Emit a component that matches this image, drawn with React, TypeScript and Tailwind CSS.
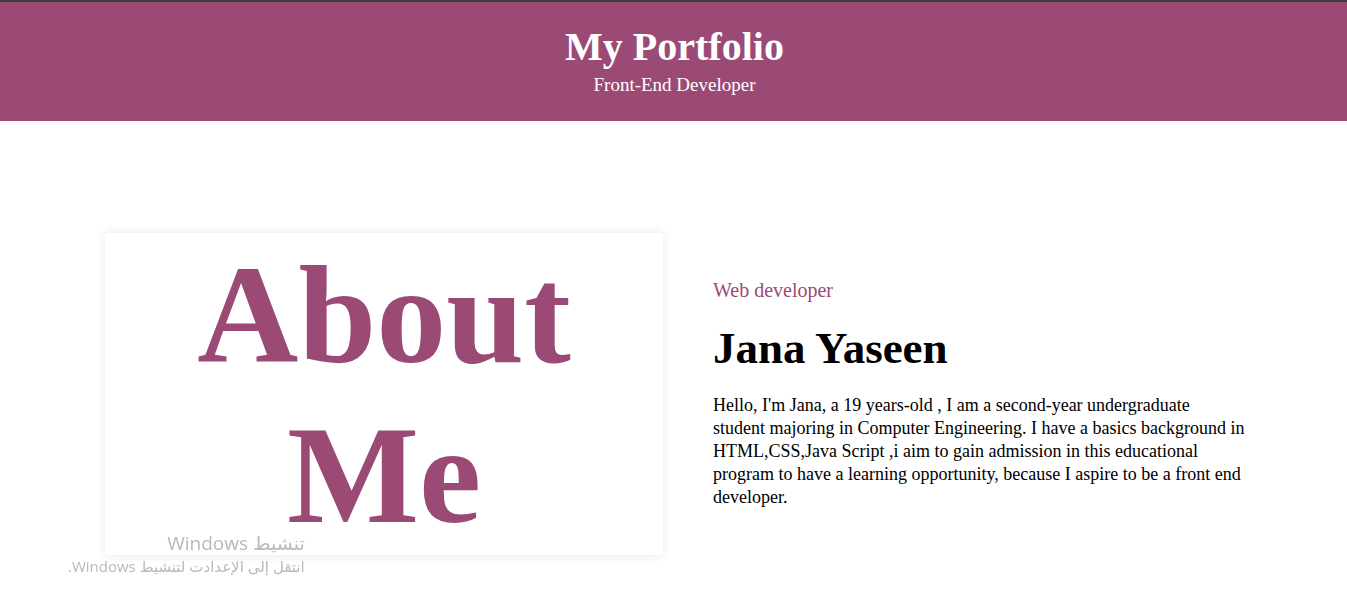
export default function App() {
  return (
    <div className="min-h-screen border-t-2 border-[#3c3c3c] bg-white font-['Liberation_Serif',serif] text-black">
      <header className="bg-[#9b4a75] pt-[21px] pb-[23px] pl-0.5 text-center text-white">
        <h1 className="text-[40px] leading-[48px] font-bold">My Portfolio</h1>
        <p className="text-[19px] leading-[27px]">Front-End Developer</p>
      </header>
      <main className="grid grid-cols-1 items-center gap-[50px] pt-28 pr-[7.5%] pb-12 pl-[7.8%] md:grid-cols-[558fr_533fr]">
        <section className="pt-0.5 text-center shadow-[0_0_10px_rgba(0,0,0,0.1)]">
          <h2 className="px-16 text-[140px] leading-[160px] font-bold text-[#9b4a75]">About Me</h2>
        </section>
        <section className="pb-0.5">
          <p className="text-[20px] leading-[24px] text-[#9b4a75]">Web developer</p>
          <h2 className="mt-[18px] text-[45px] leading-[56px] font-bold">Jana Yaseen</h2>
          <p className="mt-[18px] text-[18px] leading-[23px]">
            Hello, I'm Jana, a 19 years-old , I am a second-year undergraduate student majoring in Computer Engineering. I have a basics background in HTML,CSS,Java Script ,i aim to gain admission in this educational program to have a learning opportunity, because I aspire to be a front end developer.
          </p>
        </section>
      </main>
      <aside dir="rtl" className="pointer-events-none fixed bottom-8 left-[68px] font-['Open_Sans','DejaVu_Sans',sans-serif] text-[#b9b9b9]">
        <p className="text-[19px] leading-[26px]">تنشيط Windows</p>
        <p className="text-[15px] leading-[20px]">انتقل إلى الإعدادت لتنشيط Windows.</p>
      </aside>
    </div>
  );
}
